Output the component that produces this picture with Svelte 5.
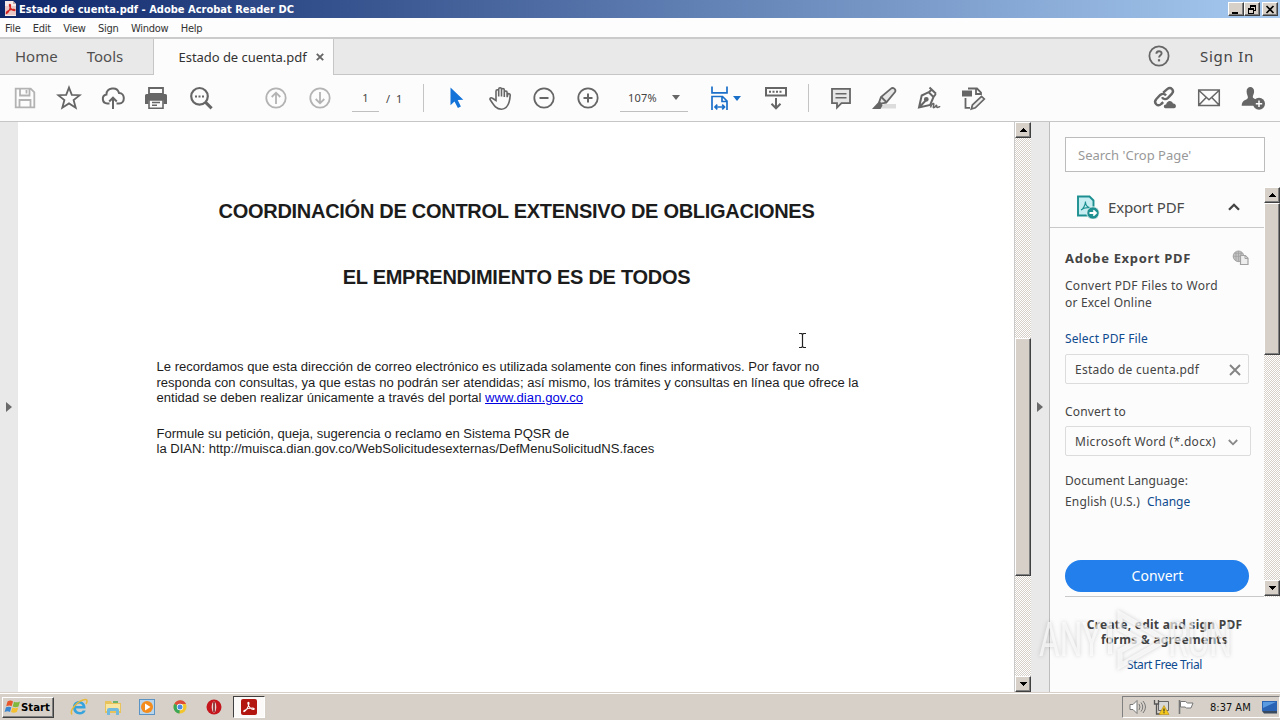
<script lang="ts">
  const menus = ['File', 'Edit', 'View', 'Sign', 'Window', 'Help'];
  const fileName = 'Estado de cuenta.pdf';
</script>

{#snippet arrow(dir: string)}
  <span class="sb-btn">
    <svg width="7" height="4" viewBox="0 0 7 4" shape-rendering="crispEdges">
      {#if dir === 'up'}
        <path d="M0 4h7v-1h-1v-1h-1v-1h-1v-1h-1v1h-1v1h-1v1h-1z" />
      {:else}
        <path d="M0 0h7v1h-1v1h-1v1h-1v1h-1v-1h-1v-1h-1v-1h-1z" />
      {/if}
    </svg>
  </span>
{/snippet}

{#snippet acrobat(size: number)}
  <svg width={size} height={size} viewBox="0 0 16 16">
    <rect width="16" height="16" rx="2" fill="#b3150f" />
    <path
      d="M3 12.600c1.600-.4 4.700-4.600 5-8.100.1-1.600-1.300-1.600-1.100 0 .4 2.800 3.200 6 5.500 6 1.600-.2.900-1.500-1-1.500-2.800 0-6.100.9-8 2.400-.7.700-.8 1.200-.4 1.200z"
      fill="none"
      stroke="#fff"
      stroke-width="1.100"
    />
  </svg>
{/snippet}

<div class="screen">
  <header class="titlebar">
    <svg width="13" height="16" viewBox="0 0 13 16">
      <path d="M1 0h8l3 3v12H1z" fill="#f6e9e8" />
      <path d="M9 0v3h3z" fill="#c9a5a5" />
      <rect x="1" y="5" width="11" height="9" fill="#e9c9c7" />
      <path
        d="M2.500 12.500c2-1 4-5 4-8 0-1.500-1.500-1.500-1 0 .5 2.500 2.500 5 5 5 1-.2.600-1.200-.8-1.200-2.500 0-5.500 1-7 2.700-.5.800-.6 1.200-.2 1.500z"
        fill="none"
        stroke="#d4221e"
        stroke-width="1.300"
      />
    </svg>
    <span class="titlebar__text">{fileName} - Adobe Acrobat Reader DC</span>
    <div class="titlebar__buttons">
      <span class="win-btn">
        <svg width="12" height="11" viewBox="0 0 12 11"><path d="M2 8h6v2H2z" /></svg>
      </span>
      <span class="win-btn">
        <svg width="12" height="11" viewBox="0 0 12 11" shape-rendering="crispEdges">
          <path d="M4 1h6v6H8V6h1V3H5v1H4zM2 4h6v6H2zm1 2v3h4V6z" fill-rule="evenodd" />
        </svg>
      </span>
      <span class="win-btn win-btn--close">
        <svg width="12" height="11" viewBox="0 0 12 11"><path d="M2.500 2l7 7M9.500 2l-7 7" stroke="#000" stroke-width="1.700" /></svg>
      </span>
    </div>
  </header>

  <nav class="menubar">
    {#each menus as menu}
      <span>{menu}</span>
    {/each}
  </nav>

  <div class="tabs">
    <div class="tabs__left">
      <span class="tabs__home">Home</span>
      <span class="tabs__tools">Tools</span>
    </div>
    <div class="tab">
      <span>{fileName}</span>
      <svg width="8" height="8" viewBox="0 0 8 8"><path d="M.8.8l6.400 6.400M7.200.8L.8 7.200" stroke="#666" stroke-width="1.900" /></svg>
    </div>
    <div class="tabs__right">
      <svg width="22" height="22" viewBox="0 0 22 22" fill="none" stroke="#666">
        <circle cx="11" cy="11" r="9.600" stroke-width="1.800" />
        <path d="M8.400 8.800c0-3.400 5.300-3.200 5.200-.3-.1 1.800-2.500 1.900-2.500 4.100" stroke-width="1.900" />
        <path d="M11 14.200v2.200" stroke-width="2.200" />
      </svg>
      <span>Sign In</span>
    </div>
  </div>

  <div class="toolbar">
    <div class="tools tools--file">
      <svg class="dim" viewBox="0 0 26 26">
        <path d="M3.700 3.700h15l3.600 3.600v15H3.700zM8 4v6.500h9.500V4M14.500 5v3.500M7.500 22v-7h11v7" />
      </svg>
      <svg viewBox="0 0 26 26">
        <path d="M13 2.600l2.800 7.200 8 .4-6.200 4.900 2.100 7.600-6.700-4.300-6.700 4.300 2.100-7.600-6.200-4.900 8-.4z" />
      </svg>
      <svg viewBox="0 0 26 26">
        <path d="M9.500 18.500H7.300a4.500 4.500 0 0 1-.9-8.900c.2-6.900 10.600-8.600 12.600-1.700 6.500.1 6.300 10.600.2 10.600h-2.700M13 24v-11M9.200 16.500L13 12.700l3.800 3.800" stroke-width="2" />
      </svg>
      <svg viewBox="0 0 26 26">
        <path d="M5 3h14v6H5z" />
        <path d="M2.500 9h19q1.500 0 1.500 1.500V19h-3.500v-4h-15v4H1v-8.500Q1 9 2.500 9z" fill="#666" stroke="none" />
        <path d="M5 15h14v8.200H5zM8 17.500h8M8 20.300h5" stroke-width="1.600" />
      </svg>
      <svg viewBox="0 0 26 26">
        <circle cx="11.500" cy="11.300" r="8.300" stroke-width="2.200" />
        <path d="M17.600 17.400l6 6" stroke-width="3" />
        <path d="M7 11.500h2M10.500 11.500h2M14 11.500h2" stroke-width="1.800" />
      </svg>
    </div>
    <div class="tools tools--pages">
      <svg class="dim" viewBox="0 0 26 26">
        <circle cx="13" cy="13" r="9.700" />
        <path d="M13 19V8M8.700 12L13 7.700l4.300 4.300" />
      </svg>
      <svg class="dim" viewBox="0 0 26 26">
        <circle cx="13" cy="13" r="9.700" />
        <path d="M13 7v11M8.700 14l4.300 4.300 4.300-4.300" />
      </svg>
    </div>
    <span class="page-input">1</span>
    <span class="page-total">/ 1</span>
    <i class="sep"></i>
    <div class="tools tools--nav">
      <svg viewBox="0 0 26 26">
        <path d="M7.500 2.500v17.700l4-3.700 3.400 6.500 3-1.500-3.200-6.400 5.600-.3z" fill="#1373d9" stroke="none" />
      </svg>
      <svg viewBox="0 0 26 26">
        <path
          d="M9 15.500V6.300c0-2 2.700-2 2.700 0v5.200V4.300c0-2.100 2.800-2.100 2.800 0v7.200V5c0-2 2.800-2 2.800 0v7V7.500c0-2 2.800-2 2.800 0V11l.1 1.200.5-2.700c.5-1.500 2.700-1 2.500.8-.5 7.500-2 13.700-8.700 13.900-5.400 0-7.500-3.600-11.300-9.400-.8-1.600 1-2.700 2.300-1.500z"
          stroke-width="1.600"
        />
      </svg>
      <svg viewBox="0 0 26 26">
        <circle cx="13" cy="13" r="9.700" />
        <path d="M8.500 13h9" stroke-width="2" />
      </svg>
      <svg viewBox="0 0 26 26">
        <circle cx="13" cy="13" r="9.700" />
        <path d="M8.500 13h9M13 8.500v9" stroke-width="2" />
      </svg>
    </div>
    <div class="zoom">
      <span>107%</span>
      <i class="caret"></i>
    </div>
    <div class="fit">
      <svg viewBox="0 0 26 26" class="blue">
        <path d="M6 1.500v6.300h15V1.500M6 25V11.500h10.500l4.500 4.500v9M16 11.500v5h5M9 22h9.500M11.300 19.700L9 22l2.300 2.300M16.200 19.700l2.300 2.300-2.300 2.300" stroke-width="1.700" />
      </svg>
      <i class="caret caret--blue"></i>
    </div>
    <div class="tools">
      <svg viewBox="0 0 26 26">
        <path d="M3 3h20v7.500H3z" stroke-width="2" />
        <path d="M6 6.800h14" stroke-width="2" stroke-dasharray="2 1.500" />
        <path d="M13 13v10M8.500 18.800l4.500 4.500 4.500-4.500" stroke-width="2" />
      </svg>
    </div>
    <i class="sep sep--2"></i>
    <div class="tools tools--comment">
      <svg viewBox="0 0 26 26">
        <path d="M4 3.800h18v14.400h-8.500L9 22.700v-4.500H4z" fill="#e6e6e6" />
        <path d="M7.500 8.700h11M7.500 12.700h11" stroke-width="1.500" />
      </svg>
      <svg viewBox="0 0 26 26">
        <path d="M12 19h12v4.500H8z" fill="#dcdcdc" stroke="none" />
        <path d="M19 3.700c2-2 5.500.8 4 3.300l-8.800 10.600-5.400 1-1.600-1.500 1.800-5z" fill="#e6e6e6" />
        <path d="M9.300 12l5 5M2 23.200l4.800-5.200 2.800 2.300-1.600 2.900z" fill="#666" />
      </svg>
      <svg viewBox="0 0 26 26">
        <path d="M13.500 2.500l6.500 6.200M3 22.500l2.700-12 7-3.300 4.800 4.800-3.300 8zM3 22.500l6.500-6.800M12.700 7.200l3-2.500M17.500 12l2.300-3" fill="none" stroke-width="2" />
        <circle cx="10.300" cy="14.300" r="1.500" fill="#666" />
        <path d="M14.500 22.500c1-3 3-5 3.300-3.500s-1.400 4 .2 3.600 1.800-2.600 2.500-2.200-.3 2.200 1 2.100 1-1.300 2.700-.7" stroke-width="1.500" />
      </svg>
      <svg viewBox="0 0 26 26">
        <path d="M8 3.500h9l4 4v2.500M16 4v5h5M5.500 13v9.800H10" />
        <path d="M2 5.500h10v6H2z" fill="#666" stroke="none" />
        <path d="M12.500 19.800l9-8.500 2.800 2.700-9 8.800-4 1.200z" fill="#eee" stroke-width="1.700" />
      </svg>
    </div>
    <div class="tools tools--share">
      <svg viewBox="0 0 26 26">
        <path d="M11.200 7.700l4-3.600c3.700-3 7.500 1.300 4.800 4.500l-4 4.300c-1.900 1.800-4.800 1.600-6-.6M14 10.500c-1.500-2.200-4-1.900-5.800-.5l-3.800 4c-3.500 3.900 1.300 8.400 4.800 5l2-1.800" stroke-width="2.400" />
        <path d="M13.500 23.300c-2.200 0-2.300-4 .6-3.700.8-4.600 6-4.600 6.900-1 3.400-.4 4 4.700 1 4.700z" fill="#666" stroke="none" />
      </svg>
      <svg viewBox="0 0 26 26">
        <path d="M2.700 5h20.600v15.500H2.700zM3 5.500l10 9.200 10-9.200M3 20l7.200-7.600M23 20l-7.200-7.600" stroke-width="1.500" />
      </svg>
      <svg viewBox="0 0 26 26">
        <path d="M6.600 6.500c-.3-6 7.800-6 7.500 0 0 2.700-1.300 3.800-1.300 5.500 0 1.600 3.200 1.800 3.700 3L14 20.800H1.700c0-6.500 5.800-5.300 6.200-8 .2-2-1.300-3.300-1.300-6.300z" fill="#666" stroke="none" />
        <circle cx="19" cy="18.800" r="6" fill="#666" stroke="none" />
        <path d="M15.800 18.800h6.400M19 15.600v6.400" stroke="#fff" stroke-width="1.500" />
      </svg>
    </div>
  </div>

  <main class="work">
    <div class="rail rail--left"><i class="rail__tri"></i></div>
    <article class="doc">
      <h1>COORDINACIÓN DE CONTROL EXTENSIVO DE OBLIGACIONES</h1>
      <h2>EL EMPRENDIMIENTO ES DE TODOS</h2>
      <p>
        Le recordamos que esta dirección de correo electrónico es utilizada solamente con fines informativos. Por favor no<br />
        responda con consultas, ya que estas no podrán ser atendidas; así mismo, los trámites y consultas en línea que ofrece la<br />
        entidad se deben realizar únicamente a través del portal <span class="link">www.dian.gov.co</span>
      </p>
      <p>
        Formule su petición, queja, sugerencia o reclamo en Sistema PQSR de<br />
        la DIAN: http://muisca.dian.gov.co/WebSolicitudesexternas/DefMenuSolicitudNS.faces
      </p>
      <svg class="ibeam" width="9" height="17" viewBox="0 0 9 17">
        <path d="M1 1.500h2.500l1 1 1-1H8M1 15.500h2.500l1-1 1 1H8M4.500 2.500v12" fill="none" stroke="#222" stroke-width="1.200" />
      </svg>
    </article>
    <div class="scrollbar scrollbar--doc">
      {@render arrow('up')}
      <span class="thumb"></span>
      {@render arrow('down')}
    </div>
    <div class="rail rail--right"><i class="rail__tri"></i></div>

    <aside class="panel">
      <div class="search">Search 'Crop Page'</div>
      <div class="panel__body">
        <div class="panel__content">
          <div class="panel__head">
            <svg width="24" height="24" viewBox="0 0 24 24">
              <path d="M2 1.500h11.500l4 4V20.500H2z" fill="#c5edf2" stroke="#1d8f90" stroke-width="1.900" />
              <path d="M5 15c2-1 4.500-5 4.500-8.500M9.500 7.500c.3 3 2.500 5 5 5.300M5 15c2-2 5-3 9.500-2.200" fill="none" stroke="#1d8f90" stroke-width="1.200" />
              <circle cx="17" cy="18" r="6.200" fill="#1d8f90" stroke="#fafafa" stroke-width=".8" />
              <path d="M13.500 18h6M17.300 15.300L20 18l-2.700 2.700" fill="none" stroke="#fff" stroke-width="1.800" />
            </svg>
            <span>Export PDF</span>
            <svg class="chev" width="12" height="8" viewBox="0 0 12 8"><path d="M1 6.800l5-5 5 5" fill="none" stroke="#444" stroke-width="2.300" /></svg>
          </div>
          <div class="export">
            <div class="export__title">
              <b>Adobe Export PDF</b>
              <svg width="17" height="16" viewBox="0 0 17 16" fill="none" stroke="#a2a2a2">
                <circle cx="6.500" cy="6.300" r="5.300" fill="#c4c4c4" />
                <path d="M1 6.300h11M6.500 1v11M2.500 3.300h8M4 2v9M9 2v9" stroke-width=".8" />
                <path d="M8.500 5.500h4.800l2.700 2.700v6.300H8.500z" fill="#eee" stroke-width="1.200" />
                <path d="M13 5.500v3h3" />
              </svg>
            </div>
            <p class="export__desc">Convert PDF Files to Word<br /><span>or Excel Online</span></p>
            <span class="export__link">Select PDF File</span>
            <div class="field field--file">
              <span>{fileName}</span>
              <svg width="12" height="12" viewBox="0 0 12 12"><path d="M1 1l10 10M11 1L1 11" stroke="#848484" stroke-width="1.900" /></svg>
            </div>
            <span class="export__label">Convert to</span>
            <div class="field field--format">
              <span>Microsoft Word (*.docx)</span>
              <svg width="10" height="7" viewBox="0 0 10 7"><path d="M.8 1l4.200 4.300L9.200 1" fill="none" stroke="#888" stroke-width="1.800" /></svg>
            </div>
            <span class="export__lang">Document Language:</span>
            <div class="export__row"><span>English (U.S.)</span><span class="change">Change</span></div>
            <div class="convert">Convert</div>
          </div>
        </div>
        <div class="scrollbar scrollbar--panel">
          {@render arrow('up')}
          <span class="thumb"></span>
          {@render arrow('down')}
        </div>
      </div>
      <div class="promo">
        <b>Create, edit and sign PDF</b>
        <b>forms & agreements</b>
        <span>Start Free Trial</span>
      </div>
      <svg class="watermark" width="204" height="70" viewBox="0 0 204 70">
        <g fill="#fff" fill-opacity=".65">
          <text x="5" y="50" textLength="62" lengthAdjust="spacingAndGlyphs">ANY</text>
          <text x="134" y="50" textLength="64" lengthAdjust="spacingAndGlyphs">RUN</text>
        </g>
        <g fill="none" stroke="#fff" stroke-opacity=".7">
          <path d="M76 16v32" stroke-width="4" />
          <path d="M86 8l45 26-45 26V45l20-11-20-11z" stroke-width="5" />
        </g>
      </svg>
    </aside>
  </main>

  <footer class="taskbar">
    <div class="start">
      <svg width="17" height="16" viewBox="0 0 17 16">
        <path d="M3.500 2.500C6 1 7.500 1.600 9 2.400L7.600 7.200C6 6.300 4.200 6.500 2.200 7.300z" fill="#e8562a" />
        <path d="M10 2.800c2 .9 4 .7 6-.3l-1.500 5c-2 1-4 .8-5.800 0z" fill="#7fb83c" />
        <path d="M2 8.300c2-.9 3.700-.9 5.300 0L6 13c-1.700-1-3.400-.8-5.400 0z" fill="#3a86d0" />
        <path d="M8.400 8.500c2 .9 3.900.8 5.800 0L12.800 13c-2 1.100-4 1-5.800.1z" fill="#f5c030" />
      </svg>
      <b>Start</b>
    </div>
    <div class="quick">
      <svg viewBox="0 0 18 18">
        <path d="M15.500 10.500H6c.2 4 5.500 4.500 6.700 2h3c-2 6-12.700 5.500-12.700-3.200 0-8.500 13-8.500 12.500 1.200zM6 8h6.500C12 4.500 6.500 4.500 6 8z" fill="#36a3dc" fill-rule="evenodd" />
        <path d="M2 16.500C-1 12 8 2.500 15 1.500c3-.2 2 3 1 4.500" fill="none" stroke="#e9b93a" stroke-width="1.500" />
      </svg>
      <svg viewBox="0 0 18 18">
        <path d="M1 3h6l1 2h9v10H1z" fill="#e8c25a" />
        <path d="M2 6h14v7H2z" fill="#f8e6a0" />
        <path d="M3 17v-5q0-2 2-2h8q2 0 2 2v5h-3v-4H6v4z" fill="#72b9de" />
        <path d="M9 3h5v2H9z" fill="#6bb36c" />
      </svg>
      <svg viewBox="0 0 18 18">
        <rect x="1.500" y="1.500" width="15" height="15" fill="#b9d5ec" stroke="#5b94c4" />
        <circle cx="9" cy="9" r="6" fill="#f38c1d" />
        <path d="M7 5.500l5.500 3.500L7 12.500z" fill="#fff" />
      </svg>
      <svg viewBox="0 0 18 18">
        <circle cx="9" cy="9" r="6.500" fill="#f3c52d" />
        <path d="M9 9L3.400 5.700a6.500 6.500 0 0 1 11.700.3H9z" fill="#dd4b3a" />
        <path d="M9 9l-.5 6.500A6.500 6.500 0 0 1 3.400 5.700z" fill="#3aa657" />
        <circle cx="9" cy="9" r="3.200" fill="#fff" />
        <circle cx="9" cy="9" r="2.500" fill="#4a8be0" />
      </svg>
      <svg viewBox="0 0 18 18">
        <circle cx="9" cy="9" r="7.500" fill="#c4161c" />
        <ellipse cx="9" cy="9" rx="2.300" ry="5.500" fill="#e9d5d3" />
        <path d="M9 4v10" stroke="#7d0d10" stroke-width="1.500" />
      </svg>
    </div>
    <div class="task-active">{@render acrobat(16)}</div>
    <div class="tray">
      <svg width="17" height="16" viewBox="0 0 17 16" fill="none" stroke="#777">
        <path d="M1 5.500h3l4-4v13l-4-4H1z" fill="#fff" />
        <path d="M10 5q2 3 0 6M12 3.500q3.500 4.500 0 9M14 2q5 6 0 12" />
      </svg>
      <svg width="17" height="16" viewBox="0 0 17 16">
        <path d="M5.500 2.500h10v9h-10z" fill="#d8d8d8" stroke="#666" />
        <path d="M1.500 1v4h4V1M3.500 5v10h4" fill="none" stroke="#555" stroke-width="1.300" />
        <path d="M11 6.500l5 9H6z" fill="#f5c81c" stroke="#b58a10" stroke-width=".6" />
        <path d="M11 9.500v3M11 13.300v1" stroke="#333" stroke-width="1.200" />
      </svg>
      <svg width="17" height="16" viewBox="0 0 17 16">
        <path d="M3.500 2.500h5l2 1.500H16l-2 5H9.500l-1.500-1H3.500z" fill="#fff" stroke="#777" />
        <path d="M2.500 1v14" stroke="#777" stroke-width="1.600" />
      </svg>
      <span>8:37 AM</span>
      <svg width="17" height="16" viewBox="0 0 17 16">
        <path d="M1 2h15v10H1z" fill="#2a62b4" />
        <path d="M2 3h13L2 9z" fill="#5a9ae0" />
        <path d="M1 12h15v2.500H3z" fill="#39495e" />
      </svg>
    </div>
  </footer>
</div>

<style>
  :global(body) {
    margin: 0;
    overflow: hidden;
  }

  .screen {
    width: 1280px;
    height: 720px;
    display: flex;
    flex-direction: column;
    overflow: hidden;
    background: #fdfdfd;
    color: #444;
    font-family: 'Noto Sans', sans-serif;
    font-size: 12px;
    white-space: nowrap;
  }

  .screen * {
    box-sizing: border-box;
  }

  svg {
    display: block;
    flex: none;
  }

  /* title bar and menus */
  .titlebar {
    height: 18px;
    flex: none;
    display: flex;
    align-items: center;
    padding: 0 2px 0 4px;
    background: linear-gradient(90deg, #0e276b, #a6caf0);
  }

  .titlebar__text {
    margin-left: 2px;
    color: #fff;
    font: bold 11px/19px 'DejaVu Sans Condensed', 'DejaVu Sans', sans-serif;
    letter-spacing: 0.01px;
  }

  .titlebar__buttons {
    margin-left: auto;
    display: flex;
  }

  .win-btn,
  .sb-btn,
  .thumb,
  .start {
    background: #d6d0c8;
    border: 1px solid;
    border-color: #fff #404040 #404040 #fff;
    box-shadow: inset -1px -1px #808080;
  }

  .win-btn {
    width: 16px;
    height: 14px;
    padding: 1px;
  }

  .win-btn--close {
    margin-left: 2px;
  }

  .menubar {
    height: 19px;
    flex: none;
    display: flex;
    gap: 12.3px;
    padding-left: 5px;
    color: #333;
    font: 11px/21px 'DejaVu Sans Condensed', 'DejaVu Sans', sans-serif;
    letter-spacing: -0.25px;
  }

  /* tabs */
  .tabs {
    height: 38px;
    flex: none;
    display: flex;
    border-top: 2px solid #cbcbcb;
    background: #e9e9e9;
    font-size: 15px;
    line-height: 35px;
  }

  .tabs__left {
    width: 154px;
    display: flex;
    padding-left: 15px;
    border-right: 1px solid #c6c6c6;
    border-bottom: 1px solid #c6c6c6;
    color: #505050;
  }

  .tabs__tools {
    margin-left: 29px;
  }

  .tab {
    width: 179px;
    display: flex;
    align-items: center;
    padding-left: 24.500px;
    background: #fcfcfc;
    color: #333;
    font-size: 13px;
    letter-spacing: -0.04px;
  }

  .tab svg {
    margin-left: 9px;
  }

  .tabs__right {
    flex: 1;
    display: flex;
    align-items: center;
    justify-content: flex-end;
    padding: 0 26px 1px 0;
    border-left: 1px solid #c6c6c6;
    border-bottom: 1px solid #c6c6c6;
    color: #444;
    letter-spacing: 0.75px;
  }

  .tabs__right svg {
    margin-right: 30px;
  }

  /* toolbar */
  .toolbar {
    height: 47px;
    flex: none;
    display: flex;
    align-items: center;
    padding: 0 14px 0 12px;
    border-bottom: 1px solid #c6c6c6;
    background: #fcfcfc;
    font-size: 11px;
  }

  .tools {
    display: flex;
    gap: 18px;
  }

  .toolbar svg {
    width: 26px;
    height: 26px;
    fill: none;
    stroke: #666;
    stroke-width: 1.8;
  }

  .toolbar svg.dim {
    stroke: #b3b3b3;
  }

  .toolbar svg.blue {
    stroke: #1a6fc8;
  }

  .tools--pages {
    margin-left: 49px;
  }

  .page-input {
    width: 27px;
    height: 28px;
    margin-left: 19px;
    border-bottom: 1px solid #bfbfbf;
    line-height: 28px;
    text-align: center;
  }

  .page-total {
    width: 17px;
    margin-left: 7px;
    word-spacing: 3px;
  }

  .sep {
    width: 1px;
    height: 28px;
    margin-left: 20px;
    background: #c4c4c4;
  }

  .tools--nav {
    margin-left: 19px;
  }

  .zoom {
    width: 68px;
    height: 28px;
    display: flex;
    align-items: center;
    justify-content: space-between;
    margin-left: 19px;
    padding: 0 8px;
    border-bottom: 1px solid #bfbfbf;
    letter-spacing: 0.2px;
  }

  .caret {
    border: 4px solid transparent;
    border-top: 5px solid #666;
    border-bottom: 0;
  }

  .caret--blue {
    margin-left: 1px;
    border-top-color: #1a6fc8;
  }

  .fit {
    display: flex;
    align-items: center;
    margin: 0 22px 0 18px;
  }

  .sep--2 {
    margin: 0 19px 0 19px;
  }

  .tools--share {
    margin-left: auto;
  }

  /* work area */
  .work {
    flex: 1;
    min-height: 0;
    display: flex;
  }

  .rail {
    display: flex;
    align-items: center;
    background: #e9e9e9;
  }

  .rail--left {
    width: 18px;
    padding-left: 6px;
  }

  .rail--right {
    width: 19px;
    padding-left: 6px;
    border-right: 1px solid #bdbdbd;
  }

  .rail__tri {
    border: 5px solid transparent;
    border-left: 6px solid #6a6a6a;
    border-right: 0;
  }

  .doc {
    position: relative;
    width: 996px;
    background: #fff;
    color: #1c1c1c;
    font-family: 'Liberation Sans', Arial, sans-serif;
  }

  .doc h1,
  .doc h2 {
    margin: 0 0 0 1px;
    font-size: 20px;
    line-height: 24px;
    letter-spacing: -0.28px;
    text-align: center;
  }

  .doc h1 {
    padding-top: 77px;
  }

  .doc h2 {
    margin: 42px 0 70px 1px;
  }

  .doc p {
    margin: 0 0 20px 138.5px;
    font-size: 13.06px;
    line-height: 15.6px;
  }

  .link {
    color: #0000e0;
    text-decoration: underline;
    letter-spacing: 0.07px;
  }

  .ibeam {
    position: absolute;
    left: 780px;
    top: 210px;
  }

  .scrollbar {
    width: 17px;
    flex: none;
    display: flex;
    flex-direction: column;
    border-left: 1px solid #c9c9c9;
    background: repeating-conic-gradient(#fff 0 25%, #d6d0c8 0 50%) 0 0 / 2px 2px;
  }

  .sb-btn {
    width: 16px;
    height: 16px;
    flex: none;
    display: flex;
    align-items: center;
    justify-content: center;
  }

  .sb-btn:last-child {
    margin-top: auto;
  }

  .scrollbar--doc .thumb {
    height: 238px;
    margin-top: 200px;
  }

  /* tools panel */
  .panel {
    position: relative;
    flex: 1;
    display: flex;
    flex-direction: column;
    background: #fcfcfc;
  }

  .search {
    width: 200px;
    height: 35px;
    margin: 15px 0 15px 15px;
    padding-left: 12px;
    border: 1px solid #bcbcbc;
    background: #fff;
    color: #999;
    font-size: 13px;
    line-height: 35px;
  }

  .panel__body {
    height: 410px;
    display: flex;
  }

  .panel__content {
    width: 214px;
  }

  .panel__head {
    height: 41px;
    display: flex;
    align-items: center;
    padding: 0 24px 0 26px;
    border-bottom: 1px solid #c9c9c9;
    color: #4a4a4a;
    font-size: 15px;
    letter-spacing: -0.19px;
  }

  .panel__head span {
    margin-left: 8px;
  }

  .chev {
    margin-left: auto;
  }

  .export {
    height: 369px;
    display: flex;
    flex-direction: column;
    margin-left: 15px;
    border-bottom: 1px solid #c9c9c9;
    line-height: 20px;
  }

  .export__title {
    display: flex;
    justify-content: space-between;
    align-items: center;
    width: 184px;
    margin-top: 20px;
    font-size: 13px;
    letter-spacing: 0.66px;
  }

  .export__desc {
    margin: 9px 0 0;
    line-height: 17px;
    letter-spacing: 0.28px;
  }

  .export__desc span {
    letter-spacing: 0.2px;
  }

  .export__link {
    margin-top: 18px;
    letter-spacing: 0.13px;
  }

  .export__link,
  .change,
  .promo span {
    color: #0f4b8f;
  }

  .field {
    height: 30px;
    display: flex;
    align-items: center;
    justify-content: space-between;
    padding: 1px 7px 0 9px;
    border: 1px solid #dcdcdc;
    border-radius: 2px;
  }

  .field--file {
    width: 184px;
    margin-top: 5px;
    letter-spacing: 0.25px;
  }

  .field--format {
    width: 186px;
    margin-top: 4px;
    padding-top: 2px;
    padding-right: 12px;
    letter-spacing: 0.32px;
  }

  .export__label {
    margin-top: 18px;
    letter-spacing: 0.19px;
  }

  .export__lang {
    margin-top: 15px;
    letter-spacing: 0.09px;
  }

  .export__row {
    margin-top: 1px;
    letter-spacing: 0.16px;
  }

  .change {
    margin-left: 7px;
    letter-spacing: 0;
  }

  .convert {
    width: 184px;
    height: 32px;
    margin-top: 48px;
    padding-left: 1px;
    border-radius: 16px;
    background: #237feb;
    color: #fff;
    font-size: 14px;
    line-height: 31px;
    text-align: center;
  }

  .scrollbar--panel {
    width: 16px;
    border-left: 0;
  }

  .scrollbar--panel .sb-btn:last-child {
    margin-bottom: 1px;
  }

  .scrollbar--panel .thumb {
    height: 152px;
  }

  .promo {
    display: flex;
    flex-direction: column;
    align-items: center;
    padding: 20px 1px 0 0;
    line-height: 15px;
    letter-spacing: 0.25px;
  }

  .promo span {
    margin-top: 10px;
    letter-spacing: -0.41px;
  }

  .watermark {
    position: absolute;
    left: -16px;
    top: 484px;
    filter: drop-shadow(0 0 2px rgba(0, 0, 0, 0.25));
    font: 48px Roboto, sans-serif;
  }

  /* taskbar */
  .taskbar {
    height: 28px;
    flex: none;
    display: flex;
    align-items: center;
    padding: 2px 0 0 2px;
    background: linear-gradient(#d6d0c8 1px, #fff 1px 2px, #d6d0c8 2px);
    color: #111;
    font: 11px 'DejaVu Sans Condensed', 'DejaVu Sans', sans-serif;
  }

  .start {
    width: 52px;
    height: 21px;
    display: flex;
    align-items: center;
    padding-left: 1px;
    font-size: 11.3px;
    color: #000;
  }

  .quick {
    display: flex;
    gap: 15.8px;
    margin-left: 16px;
  }

  .quick svg {
    width: 18px;
    height: 18px;
  }

  .task-active {
    width: 32px;
    height: 22px;
    display: flex;
    align-items: center;
    justify-content: center;
    margin-left: 10px;
    border: 1px solid;
    border-color: #404040 #fff #fff #404040;
    background: #fbfaf9;
  }

  .tray {
    width: 158px;
    height: 22px;
    display: flex;
    align-items: center;
    gap: 7px;
    margin-left: auto;
    padding-left: 6px;
    border: 1px solid;
    border-color: #808080 #fff #fff #808080;
  }

  .tray span {
    margin: 0 3px 0 9px;
  }
</style>
